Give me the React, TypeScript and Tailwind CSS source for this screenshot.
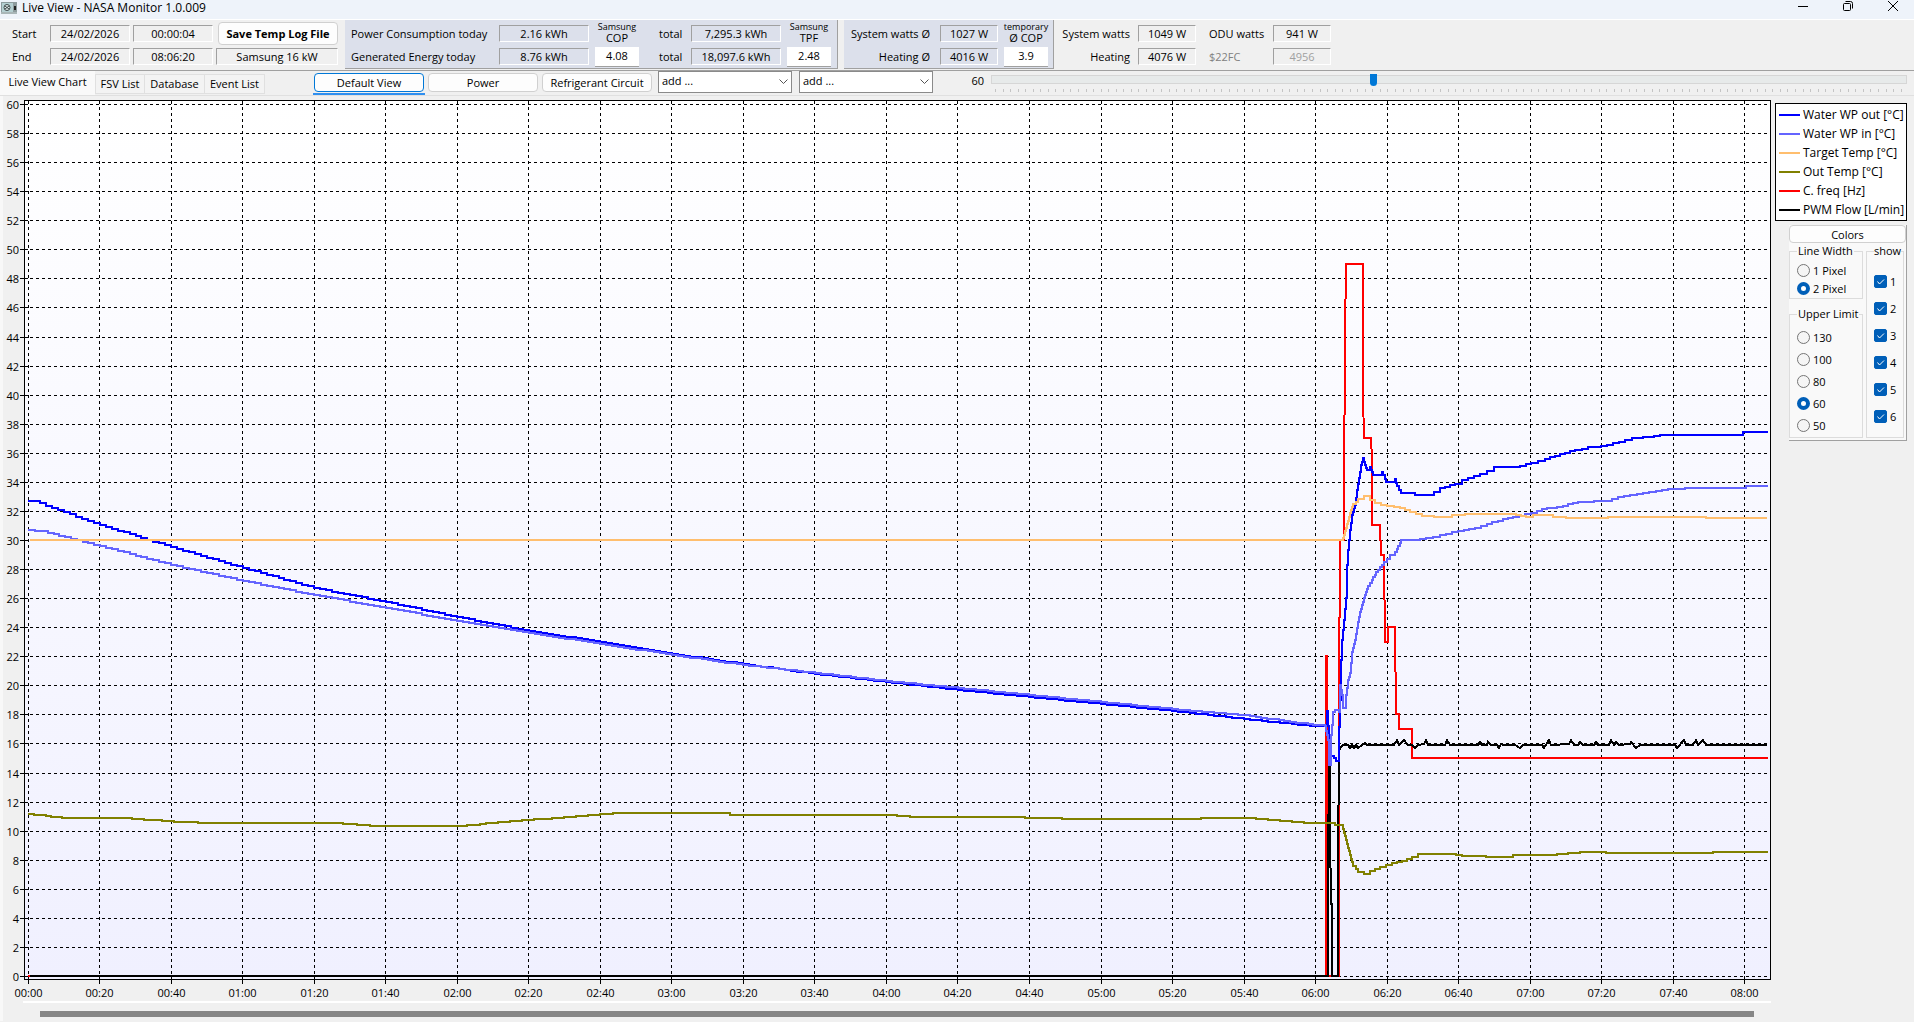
import { useState } from 'react';
import type { ReactNode } from 'react';
import clsx from 'clsx';

type Point = [number, number];

const VALUE_TICKS = Array.from({ length: 31 }, (_, i) => i * 2);
const TIME_TICKS = Array.from({ length: 25 }, (_, i) => i * 20);
const SLIDER_TICKS = Array.from({ length: 121 }, (_, i) => i);
const UPPER_LIMITS = [130, 100, 80, 60, 50];

const timeX = (minutes: number) => Math.floor(28.3 + minutes * 3.5757) + 0.5;
const valueY = (value: number) => Math.floor(976.5 - value * 14.5333) + 0.5;
const timeLabel = (minutes: number) =>
  `${String(Math.floor(minutes / 60)).padStart(2, '0')}:${String(minutes % 60).padStart(2, '0')}`;

const linePath = (points: Point[]) => points.map(([x, y], i) => `${i ? 'L' : 'M'}${x} ${y}`).join('');

const stairPath = (points: Point[]) => {
  let path = `M${points[0][0]} ${points[0][1]}`;
  for (let i = 1; i < points.length; i++) {
    const [x0, y0] = points[i - 1];
    const [x1, y1] = points[i];
    const dx = x1 - x0;
    const dy = y1 - y0;
    const steps = Math.max(1, Math.round(dx / 6), Math.min(dx, Math.round(Math.abs(dy) / 3)));
    for (let k = 1; k <= steps; k++) {
      path += `H${Math.round(x0 + (dx * k) / steps)}V${Math.round(y0 + (dy * k) / steps)}`;
    }
  }
  return path;
};

const waterOut: Point[] = [
  [28, 501], [34, 501], [52, 508], [100, 525], [171, 547], [243, 568], [314, 588], [386, 602], [457, 617],
  [529, 631], [600, 642], [672, 654], [743, 664], [815, 674], [886, 682], [958, 690], [1029, 697], [1101, 704],
  [1172, 711], [1244, 719], [1310, 726], [1326, 726], [1327, 711], [1329, 740], [1331, 756], [1334, 758],
  [1336, 761], [1339, 761], [1339, 727], [1340, 700], [1341, 660], [1342, 640], [1344, 620], [1346, 598],
  [1347, 565], [1348, 550], [1350, 530], [1352, 515], [1355, 505], [1357, 490], [1359, 478], [1361, 465],
  [1363, 458], [1365, 465], [1367, 470], [1370, 467], [1373, 475], [1380, 475], [1382, 472], [1386, 482],
  [1393, 482], [1395, 479], [1397, 486], [1401, 493], [1413, 493], [1415, 495], [1427, 495], [1440, 488],
  [1455, 484], [1462, 480], [1480, 474], [1494, 467], [1515, 467], [1531, 463], [1545, 459], [1560, 454],
  [1575, 450], [1588, 447], [1601, 446], [1613, 443], [1625, 440], [1632, 438], [1648, 437], [1660, 435],
  [1742, 435], [1743, 432], [1768, 432],
];

const waterIn: Point[] = [
  [28, 530], [42, 531], [100, 546], [171, 565], [243, 581], [314, 595], [386, 608], [457, 621], [529, 633],
  [600, 644], [672, 655], [743, 665], [815, 673], [886, 681], [958, 688], [1029, 695], [1101, 702], [1172, 709],
  [1244, 715], [1290, 722], [1325, 726], [1328, 740], [1329, 765], [1331, 765], [1331, 735], [1332, 725],
  [1333, 712], [1335, 710], [1339, 712], [1340, 685], [1342, 695], [1343, 708], [1345, 708], [1346, 695],
  [1348, 680], [1350, 673], [1352, 652], [1355, 640], [1358, 622], [1360, 612], [1362, 605], [1365, 595],
  [1368, 586], [1372, 580], [1376, 572], [1380, 567], [1384, 562], [1390, 555], [1395, 552], [1401, 540],
  [1413, 540], [1426, 538], [1440, 535], [1458, 531], [1475, 528], [1487, 524], [1503, 519], [1513, 517],
  [1525, 514], [1531, 513], [1542, 509], [1557, 507], [1568, 504], [1578, 502], [1605, 501], [1618, 497],
  [1630, 495], [1643, 493], [1668, 489], [1690, 488], [1744, 488], [1746, 486], [1768, 486],
];

const targetTemp: Point[] = [
  [30, 540], [1340, 540], [1343, 538], [1346, 528], [1350, 513], [1353, 504], [1358, 499], [1364, 496],
  [1370, 500], [1375, 503], [1387, 506], [1400, 508], [1410, 512], [1422, 516], [1446, 517], [1452, 515],
  [1465, 514], [1510, 514], [1521, 516], [1530, 517], [1533, 515], [1551, 515], [1553, 517], [1573, 518],
  [1606, 518], [1608, 517], [1704, 517], [1706, 518], [1767, 518],
];

const outTemp: Point[] = [
  [28, 814], [46, 816], [62, 818], [120, 818], [150, 820], [180, 822], [210, 823], [330, 823], [350, 824],
  [370, 826], [460, 826], [480, 824], [510, 821], [540, 819], [570, 817], [600, 814], [620, 813], [728, 813],
  [730, 815], [890, 815], [910, 817], [1000, 817], [1080, 819], [1170, 819], [1220, 818], [1250, 818],
  [1280, 821], [1310, 823], [1333, 823], [1335, 825], [1341, 825], [1343, 829], [1346, 840], [1350, 855],
  [1353, 866], [1358, 872], [1364, 874], [1370, 871], [1380, 867], [1392, 863], [1402, 861], [1412, 857],
  [1418, 854], [1450, 854], [1462, 856], [1510, 857], [1513, 855], [1545, 855], [1580, 852], [1605, 852],
  [1606, 853], [1700, 853], [1720, 852], [1768, 852],
];

const compressor: Point[] = [
  [28, 976], [1326, 976], [1326, 656], [1327, 656], [1327, 976], [1339, 976], [1339, 700], [1340, 540],
  [1344, 540], [1344, 497], [1345, 337], [1346, 264], [1363, 264], [1363, 395], [1364, 438], [1371, 438],
  [1372, 460], [1372, 525], [1380, 525], [1381, 555], [1384, 555], [1385, 642], [1388, 642], [1388, 627],
  [1395, 627], [1396, 714], [1399, 714], [1399, 729], [1412, 729], [1412, 758], [1768, 758],
];

const pwmFlow: Point[] = [
  [30, 976], [1328, 976], [1328, 867], [1329, 765], [1330, 765], [1330, 830], [1331, 904], [1332, 904],
  [1332, 976], [1338, 976], [1338, 862], [1339, 750], [1341, 747], [1343, 745], [1348, 745], [1350, 748],
  [1352, 745], [1354, 748], [1356, 745], [1358, 748], [1362, 745], [1365, 743], [1367, 745], [1394, 745],
  [1397, 740], [1399, 745], [1404, 740], [1408, 745], [1412, 745], [1415, 748], [1418, 745], [1424, 744],
  [1426, 740], [1428, 745], [1445, 745], [1447, 740], [1450, 745], [1478, 745], [1480, 742], [1482, 745],
  [1487, 745], [1488, 742], [1491, 745], [1497, 745], [1499, 748], [1501, 744], [1503, 745], [1515, 745],
  [1520, 748], [1523, 745], [1542, 745], [1544, 748], [1549, 740], [1551, 745], [1569, 744], [1571, 740],
  [1574, 745], [1578, 745], [1580, 742], [1583, 745], [1594, 745], [1596, 742], [1598, 745], [1609, 745],
  [1611, 740], [1614, 745], [1616, 742], [1619, 745], [1630, 744], [1631, 742], [1636, 748], [1640, 745],
  [1675, 745], [1677, 748], [1684, 740], [1686, 745], [1693, 745], [1696, 740], [1698, 745], [1703, 740],
  [1706, 745], [1767, 745],
];

const SERIES = [
  { name: 'Water WP out [°C]', color: '#0000ff', path: stairPath(waterOut) },
  { name: 'Water WP in [°C]', color: '#6464ff', path: stairPath(waterIn) },
  { name: 'Target Temp [°C]', color: '#ffbe6e', path: stairPath(targetTemp) },
  { name: 'Out Temp [°C]', color: '#808000', path: stairPath(outTemp) },
  { name: 'C. freq [Hz]', color: '#ff0000', path: linePath(compressor) },
  { name: 'PWM Flow [L/min]', color: '#000000', path: linePath(pwmFlow) },
];
const DRAW_ORDER = [4, 5, 3, 0, 1, 2];

const TitleBar = () => (
  <div className="flex h-5 items-start justify-between border-b border-white bg-[#eef3fa]">
    <div className="flex items-center gap-[5px] pl-px">
      <svg width="16" height="12" viewBox="0 0 16 12" aria-hidden="true">
        <rect width="16" height="12" fill="#8d9b9e" />
        <rect x="1" y="1" width="11" height="9" fill="#b4cfd2" />
        <circle cx="6" cy="5.5" r="3" fill="#dfe9ea" stroke="#3c4648" />
        <path d="M4 4l4 3M8 4L4 7" stroke="#3c4648" />
        <rect x="13" y="4" width="2" height="4" fill="#222" />
        <rect y="10" width="16" height="2" fill="#a9b6b8" />
      </svg>
      <h1 className="text-[12px] leading-4">Live View - NASA Monitor 1.0.009</h1>
    </div>
    <div className="flex gap-[3px]">
      <button type="button" aria-label="Minimize" className="flex h-3 w-[42px] items-center justify-center">
        <svg width="10" height="10" viewBox="0 0 10 10" stroke="#000" shapeRendering="crispEdges">
          <path d="M0 5.5h10" />
        </svg>
      </button>
      <button type="button" aria-label="Restore" className="flex h-3 w-[42px] items-center justify-center">
        <svg width="10" height="10" viewBox="0 0 10 10" stroke="#000" fill="none">
          <rect x="0.5" y="2.5" width="7" height="7" rx="1" />
          <path d="M2.5 0.5h5a2 2 0 0 1 2 2v5" />
        </svg>
      </button>
      <button type="button" aria-label="Close" className="flex h-3 w-[42px] items-center justify-center">
        <svg width="10" height="10" viewBox="0 0 10 10" stroke="#000">
          <path d="M0 0l10 10M10 0L0 10" />
        </svg>
      </button>
    </div>
  </div>
);

type FieldProps = { label: string; muted?: boolean; children: ReactNode };

const Field: React.FC<FieldProps> = ({ label, muted, children }) => (
  <output
    aria-label={label}
    className={clsx(
      'h-[17px] border border-t-[#a0a0a0] border-l-[#a0a0a0] border-r-white border-b-white text-center text-[11px] leading-[15px] whitespace-nowrap',
      muted && 'text-[#a0a0a0]',
    )}
  >
    {children}
  </output>
);

type RatioProps = { caption: string; title: string; value: string };

const Ratio: React.FC<RatioProps> = ({ caption, title, value }) => (
  <div className="-mt-1 flex w-11 flex-col items-center">
    <span className="text-[9px] leading-[11px] whitespace-nowrap">{caption}</span>
    <span className="text-[11px] leading-3">{title}</span>
    <output
      aria-label={`${caption} ${title}`}
      className="mt-[3px] h-5 w-full border-b border-[#a0a0a0] bg-white text-center text-[11px] leading-[18px]"
    >
      {value}
    </output>
  </div>
);

const SummaryBar = () => (
  <div className="flex h-[51px] border-b border-[#a0a0a0] text-[11px] leading-[17px] whitespace-nowrap">
    <div className="grid w-[345px] grid-cols-[35px_80px_80px_122px] content-start gap-x-[3px] gap-y-[6px] pt-[5px] pl-3">
      <span>Start</span>
      <Field label="Start date">24/02/2026</Field>
      <Field label="Start time">00:00:04</Field>
      <button
        type="button"
        className="-my-[3px] ml-[2px] h-[23px] rounded-sm border border-[#d0d0d0] bg-[#fdfdfd] text-[11px] leading-none font-bold"
      >
        Save Temp Log File
      </button>
      <span>End</span>
      <Field label="End date">24/02/2026</Field>
      <Field label="End time">08:06:20</Field>
      <Field label="Model">Samsung 16 kW</Field>
    </div>
    <div className="flex h-[49px] w-[493px] border-r border-b border-[#a0a0a0] bg-[#dce0eb] pt-[5px] pl-[6px]">
      <div className="grid grid-cols-[148px_90px] content-start gap-y-[6px]">
        <span>Power Consumption today</span>
        <Field label="Power Consumption today">2.16 kWh</Field>
        <span>Generated Energy today</span>
        <Field label="Generated Energy today">8.76 kWh</Field>
      </div>
      <div className="mr-5 ml-[6px]">
        <Ratio caption="Samsung" title="COP" value="4.08" />
      </div>
      <div className="mr-[6px] grid grid-cols-[32px_90px] content-start gap-y-[6px]">
        <span>total</span>
        <Field label="Total power consumption">7,295.3 kWh</Field>
        <span>total</span>
        <Field label="Total generated energy">18,097.6 kWh</Field>
      </div>
      <Ratio caption="Samsung" title="TPF" value="2.48" />
    </div>
    <div className="ml-[6px] flex h-[49px] w-[210px] border-r border-b border-[#a0a0a0] bg-[#dce0eb] pt-[5px]">
      <div className="mr-[6px] grid grid-cols-[86px_58px] content-start gap-x-[10px] gap-y-[6px]">
        <span className="text-right">System watts Ø</span>
        <Field label="Average system watts">1027 W</Field>
        <span className="text-right">Heating Ø</span>
        <Field label="Average heating">4016 W</Field>
      </div>
      <Ratio caption="temporary" title="Ø COP" value="3.9" />
    </div>
    <div className="grid grid-cols-[76px_58px] content-start gap-x-2 gap-y-[6px] pt-[5px]">
      <span className="text-right">System watts</span>
      <Field label="System watts">1049 W</Field>
      <span className="text-right">Heating</span>
      <Field label="Heating">4076 W</Field>
    </div>
    <div className="ml-[13px] grid grid-cols-[64px_58px] content-start gap-y-[6px] pt-[5px]">
      <span>ODU watts</span>
      <Field label="ODU watts">941 W</Field>
      <span className="text-[#808080]">$22FC</span>
      <Field label="$22FC" muted>
        4956
      </Field>
    </div>
  </div>
);

const VIEWS = ['Default View', 'Power', 'Refrigerant Circuit'];

const AddSelect: React.FC<{ label: string }> = ({ label }) => (
  <div className="relative w-[134px]">
    <select
      aria-label={label}
      className="h-[22px] w-full appearance-none border border-[#8a8a8a] bg-white pb-[2px] pl-[3px] text-[11px]"
    >
      <option>add ...</option>
    </select>
    <svg className="pointer-events-none absolute top-2 right-1" width="9" height="6" fill="none" stroke="#555">
      <path d="M0.5 0.5l4 4l4-4" />
    </svg>
  </div>
);

const Toolbar = () => {
  const [view, setView] = useState(VIEWS[0]);
  const [scale, setScale] = useState(60);

  return (
    <div className="flex h-[25px] items-start border-b border-[#e0e0e0] text-[11px] whitespace-nowrap">
      <div role="tablist" className="flex w-[313px]">
        <button type="button" role="tab" aria-selected="true" className="h-6 w-[95px] bg-[#f9f9f9] pb-px">
          Live View Chart
        </button>
        <button type="button" role="tab" aria-selected="false" className="mt-[3px] h-5 w-[50px] border border-[#e0e0e0] bg-[#f3f3f3]">
          FSV List
        </button>
        <button type="button" role="tab" aria-selected="false" className="mt-[3px] h-5 w-[60px] border border-l-0 border-[#e0e0e0] bg-[#f3f3f3]">
          Database
        </button>
        <button type="button" role="tab" aria-selected="false" className="mt-[3px] h-5 w-[60px] border border-l-0 border-[#e0e0e0] bg-[#f3f3f3]">
          Event List
        </button>
      </div>
      <div className="mr-[5px] flex gap-[2px] pt-[2px]">
        {VIEWS.map(name => (
          <div key={name} className={clsx('border-b-2 px-px pb-px', view === name ? 'border-[#2f8fef]' : 'border-transparent')}>
            <button
              type="button"
              onClick={() => setView(name)}
              className={clsx(
                'block h-[19px] w-[110px] rounded-sm border bg-[#fdfdfd] leading-none',
                view === name ? 'border-[#0078d7]' : 'border-[#d0d0d0]',
              )}
            >
              {name}
            </button>
          </div>
        ))}
      </div>
      <div className="flex gap-[7px]">
        <AddSelect label="Add first series" />
        <AddSelect label="Add second series" />
      </div>
      <label htmlFor="scale" className="w-[58px] pr-[7px] text-right leading-[19px]">
        {scale}
      </label>
      <div className="mr-[7px] flex-1 pt-1">
        <input
          id="scale"
          type="range"
          min={10}
          max={130}
          value={scale}
          onChange={e => setScale(Number(e.target.value))}
          className="block h-[9px] w-full appearance-none border border-[#d6d6d6] bg-[#e7eaea] [&::-webkit-slider-runnable-track]:h-[7px] [&::-webkit-slider-thumb]:-mt-[2px] [&::-webkit-slider-thumb]:h-3 [&::-webkit-slider-thumb]:w-[7px] [&::-webkit-slider-thumb]:appearance-none [&::-webkit-slider-thumb]:rounded-b [&::-webkit-slider-thumb]:bg-[#0078d7]"
        />
        <div className="mt-[5px] flex justify-between px-1" aria-hidden="true">
          {SLIDER_TICKS.map(i => (
            <span key={i} className="h-[3px] w-px bg-[#c4c4c4]" />
          ))}
        </div>
      </div>
    </div>
  );
};

type ChartProps = { lineWidth: number; visible: boolean[] };

const Chart: React.FC<ChartProps> = ({ lineWidth, visible }) => (
  <svg viewBox="3 96 1768 905" className="block w-full" role="img" aria-label="Temperatures, compressor frequency and flow">
    <defs>
      <linearGradient id="plot" x1="0" y1="0" x2="0" y2="1">
        <stop offset="0" stopColor="#ffffff" />
        <stop offset="1" stopColor="#f0f0ff" />
      </linearGradient>
    </defs>
    <g shapeRendering="crispEdges" fill="none" stroke="#000">
      <rect x="24.5" y="100.5" width="1746" height="879" fill="url(#plot)" />
      {VALUE_TICKS.map(v => (
        <g key={v}>
          <path d={`M20 ${valueY(v)}H28`} />
          <path d={`M30 ${valueY(v)}H1767`} strokeDasharray="3 3" />
        </g>
      ))}
      {TIME_TICKS.map(t => (
        <g key={t}>
          <path d={`M${timeX(t)} 976V984`} />
          <path d={`M${timeX(t)} 101V976`} strokeDasharray="3 3" />
        </g>
      ))}
      {DRAW_ORDER.filter(i => visible[i]).map(i => (
        <path key={i} d={SERIES[i].path} stroke={SERIES[i].color} strokeWidth={lineWidth} />
      ))}
    </g>
    <g className="text-[11px]">
      {VALUE_TICKS.map(v => (
        <text key={v} x="19" y={valueY(v) + 4} textAnchor="end">
          {v}
        </text>
      ))}
      {TIME_TICKS.map(t => (
        <text key={t} x={timeX(t)} y="997" textAnchor="middle">
          {timeLabel(t)}
        </text>
      ))}
    </g>
  </svg>
);

type RadioProps = { name: string; label: string; checked: boolean; onSelect: () => void };

const Radio: React.FC<RadioProps> = ({ name, label, checked, onSelect }) => (
  <label className="flex items-center gap-[3px] text-[11px] leading-none">
    <input
      type="radio"
      name={name}
      checked={checked}
      onChange={onSelect}
      className="size-[13px] shrink-0 appearance-none rounded-full border border-[#757575] bg-[#f5f5f5] checked:border-4 checked:border-[#005fb8] checked:bg-white"
    />
    {label}
  </label>
);

const App = () => {
  const [lineWidth, setLineWidth] = useState(2);
  const [upperLimit, setUpperLimit] = useState(60);
  const [visible, setVisible] = useState(SERIES.map(() => true));

  const toggle = (index: number) => setVisible(visible.map((v, i) => (i === index ? !v : v)));

  return (
    <div className="min-h-screen bg-[#f0f0f0] font-['Open_Sans','Noto_Sans',sans-serif] text-black">
      <TitleBar />
      <SummaryBar />
      <Toolbar />
      <main className="flex border-l-3 border-[#f8f8f8]">
        <div className="min-w-0 flex-1">
          <Chart lineWidth={lineWidth} visible={visible} />
          <div className="ml-5 border-t-2 border-white px-[17px] pt-2 pb-1">
            <div className="h-[6px] bg-[#868686]" />
          </div>
        </div>
        <aside className="mr-[7px] ml-1 w-[132px] shrink-0 pt-[7px]">
          <ul className="border border-black bg-white py-px pl-[3px]">
            {SERIES.map(({ name, color }) => (
              <li key={name} className="flex h-[19px] items-center gap-[3px] text-[12px] whitespace-nowrap">
                <svg width="21" height="2" aria-hidden="true">
                  <rect width="21" height="2" fill={color} />
                </svg>
                {name}
              </li>
            ))}
          </ul>
          <div className="mt-1 ml-[14px] border-r border-b border-[#a0a0a0] bg-[#f9f9f9]">
            <button
              type="button"
              className="block h-[18px] w-full rounded-sm border border-[#d0d0d0] bg-[#fdfdfd] text-[11px] leading-none"
            >
              Colors
            </button>
            <div className="flex justify-between pr-[2px] pb-[2px]">
              <div className="w-[74px]">
                <fieldset className="h-[56px] border border-[#dcdcdc] pl-[7px]">
                  <legend className="px-px text-[11px] leading-4">Line Width</legend>
                  <div className="flex flex-col gap-[5px] pt-[5px]">
                    {[1, 2].map(w => (
                      <Radio
                        key={w}
                        name="line-width"
                        label={`${w} Pixel`}
                        checked={lineWidth === w}
                        onSelect={() => setLineWidth(w)}
                      />
                    ))}
                  </div>
                </fieldset>
                <fieldset className="mt-[7px] h-[132px] border border-[#dcdcdc] pl-[7px]">
                  <legend className="px-px text-[11px] leading-4 whitespace-nowrap">Upper Limit</legend>
                  <div className="flex flex-col gap-[9px] pt-[9px]">
                    {UPPER_LIMITS.map(limit => (
                      <Radio
                        key={limit}
                        name="upper-limit"
                        label={String(limit)}
                        checked={upperLimit === limit}
                        onSelect={() => setUpperLimit(limit)}
                      />
                    ))}
                  </div>
                </fieldset>
              </div>
              <fieldset className="w-[38px] border border-[#dcdcdc] pl-[7px]">
                <legend className="text-[11px] leading-4">show</legend>
                <div className="flex flex-col gap-[14px] pt-4">
                  {SERIES.map(({ name }, i) => (
                    <label key={name} className="flex items-center gap-[3px] text-[11px] leading-none">
                      <span className="relative flex">
                        <input
                          type="checkbox"
                          checked={visible[i]}
                          onChange={() => toggle(i)}
                          className="size-[13px] appearance-none rounded-xs border border-[#757575] bg-white checked:border-[#005fb8] checked:bg-[#005fb8]"
                        />
                        <svg
                          className="pointer-events-none absolute inset-0"
                          width="13"
                          height="13"
                          fill="none"
                          stroke="#fff"
                          aria-hidden="true"
                        >
                          <path d="M3.5 6.5l2 2.5l4.5-4.5" />
                        </svg>
                      </span>
                      {i + 1}
                    </label>
                  ))}
                </div>
              </fieldset>
            </div>
          </div>
        </aside>
      </main>
    </div>
  );
};

export default App;
